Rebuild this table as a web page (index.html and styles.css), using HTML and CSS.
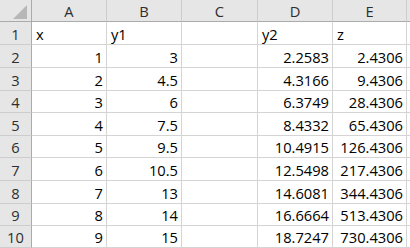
FILE: index.html
```html
<!DOCTYPE html>
<html>
<head>
<meta charset="utf-8">
<link rel="stylesheet" href="styles.css">
</head>
<body>
<div class="sheet">
  <div class="corner"><span class="tri"></span></div>
  <div class="ch">A</div><div class="ch">B</div><div class="ch">C</div><div class="ch">D</div><div class="ch">E</div><div class="ch last"></div>

  <div class="rh">1</div><div class="c">x</div><div class="c">y1</div><div class="c"></div><div class="c">y2</div><div class="c">z</div><div class="c last"></div>
  <div class="rh">2</div><div class="c n">1</div><div class="c n">3</div><div class="c"></div><div class="c n">2.2583</div><div class="c n">2.4306</div><div class="c last"></div>
  <div class="rh">3</div><div class="c n">2</div><div class="c n">4.5</div><div class="c"></div><div class="c n">4.3166</div><div class="c n">9.4306</div><div class="c last"></div>
  <div class="rh">4</div><div class="c n">3</div><div class="c n">6</div><div class="c"></div><div class="c n">6.3749</div><div class="c n">28.4306</div><div class="c last"></div>
  <div class="rh">5</div><div class="c n">4</div><div class="c n">7.5</div><div class="c"></div><div class="c n">8.4332</div><div class="c n">65.4306</div><div class="c last"></div>
  <div class="rh">6</div><div class="c n">5</div><div class="c n">9.5</div><div class="c"></div><div class="c n">10.4915</div><div class="c n">126.4306</div><div class="c last"></div>
  <div class="rh">7</div><div class="c n">6</div><div class="c n">10.5</div><div class="c"></div><div class="c n">12.5498</div><div class="c n">217.4306</div><div class="c last"></div>
  <div class="rh">8</div><div class="c n">7</div><div class="c n">13</div><div class="c"></div><div class="c n">14.6081</div><div class="c n">344.4306</div><div class="c last"></div>
  <div class="rh">9</div><div class="c n">8</div><div class="c n">14</div><div class="c"></div><div class="c n">16.6664</div><div class="c n">513.4306</div><div class="c last"></div>
  <div class="rh">10</div><div class="c n">9</div><div class="c n">15</div><div class="c"></div><div class="c n">18.7247</div><div class="c n">730.4306</div><div class="c last"></div>
</div>
</body>
</html>
```
FILE: styles.css
```css
html, body {
  margin: 0;
  padding: 0;
  background: #ffffff;
}
.sheet {
  width: 410px;
  height: 248px;
  overflow: hidden;
  display: grid;
  grid-template-columns: 32px 75px 75px 76px 75px 74px 1fr;
  grid-template-rows: 22px 23px 23px 23px 22px 23px 22px 23px 23px 22px 22px;
  font-family: "Open Sans", "Liberation Sans", sans-serif;
  font-size: 14.7px;
  line-height: 17px;
  color: #000000;
}
.sheet > div {
  box-sizing: border-box;
  display: flex;
  align-items: flex-end;
  padding: 0 3px 1px 4px;
  white-space: nowrap;
  overflow: hidden;
}
.corner {
  background: #e6e6e6;
  border-right: 1px solid #ababab;
  border-bottom: 1px solid #ababab;
  justify-content: flex-end;
}
.sheet > .corner {
  padding: 0 4px 2px 0;
}
.tri {
  width: 14px;
  height: 14px;
  background: #b7b7b7;
  clip-path: polygon(100% 0, 100% 100%, 0 100%);
}
.ch {
  background: #e6e6e6;
  border-right: 1px solid #cdcdcd;
  border-bottom: 1px solid #ababab;
  justify-content: center;
  color: #2e2e2e;
}
.rh {
  background: #e6e6e6;
  border-right: 1px solid #ababab;
  border-bottom: 1px solid #cdcdcd;
  justify-content: center;
  color: #2e2e2e;
}
.sheet > .ch, .sheet > .rh {
  padding-left: 0;
  padding-right: 0;
}
.c {
  border-right: 1px solid #d4d4d4;
  border-bottom: 1px solid #d4d4d4;
}
.n {
  justify-content: flex-end;
}
```
